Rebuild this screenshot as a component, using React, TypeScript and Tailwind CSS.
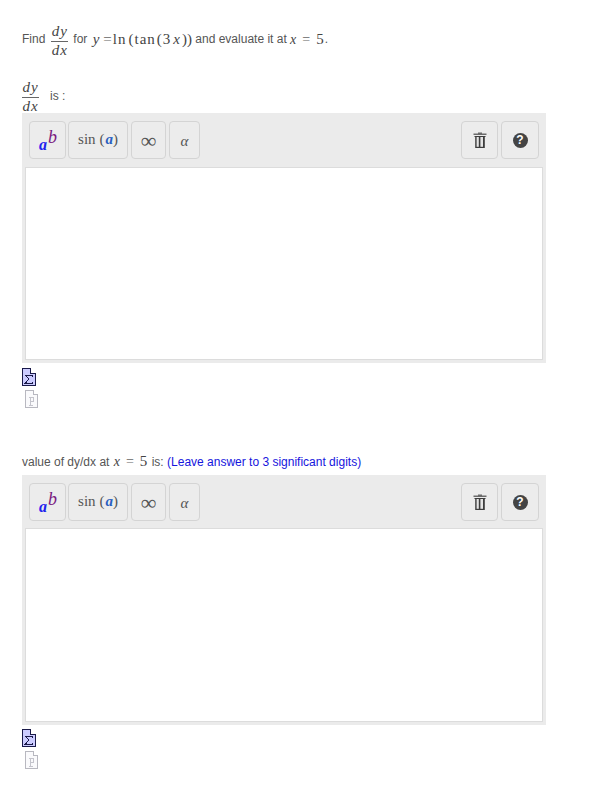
import React from "react";

const serif = "font-['Liberation_Serif',serif]";

function Frac({ className = "" }: { className?: string }) {
  return (
    <span className={`relative top-[2px] inline-flex w-[17px] flex-col items-center text-[15px] leading-[16px] italic text-[#444] ${serif} ${className}`}>
      <span className="-mt-[2px] mb-[2px] tracking-[1px]">dy</span>
      <span className="h-px w-full bg-[#666]" />
      <span className="tracking-[1px]">dx</span>
    </span>
  );
}

function SigmaIcon() {
  return (
    <svg width="14" height="18" viewBox="0 0 14 18" shapeRendering="crispEdges" className="block">
      <path d="M0.5 0.5H8.5L13.5 5.5V17.5H0.5Z" fill="#ccccff" stroke="#1a1a4a" />
      <path d="M8.5 0.5V5.5H13.5" fill="#fff" stroke="#1a1a4a" />
      <path d="M3.5 7.5H10.5V9M3.5 7.5L7 11L3.5 15H10.5V13.5" fill="none" stroke="#1a1a4a" />
    </svg>
  );
}

function PIcon() {
  return (
    <svg width="13" height="18" viewBox="0 0 13 18" shapeRendering="crispEdges" className="block">
      <path d="M0.5 0.5H8.5L12.5 4.5V17.5H0.5Z" fill="#fafafc" stroke="#b8b8c0" />
      <path d="M8.5 0.5V4.5H12.5" fill="#fff" stroke="#b8b8c0" />
      <path d="M3.5 7.5H8.5V11.5H5.5M5.5 7.5V15.5M3.5 15.5H7.5" fill="none" stroke="#c4c4cc" />
    </svg>
  );
}

function TrashIcon() {
  return (
    <svg width="14" height="16" viewBox="0 0 14 16" className="block">
      <path d="M5 0.5H9V1.5H13.5V3H0.5V1.5H5Z" fill="#6a6a6a" />
      <path d="M1.5 4H12.5V5H11.8V16H2.2V5H1.5Z" fill="#3d3d3d" />
      <rect x="3.6" y="5" width="2.2" height="9.8" fill="#e4e4e4" />
      <rect x="7.4" y="5" width="2.6" height="9.8" fill="#e4e4e4" />
    </svg>
  );
}

function HelpIcon() {
  return (
    <span className="flex h-[15px] w-[15px] items-center justify-center rounded-full bg-[#444] font-['Liberation_Sans',sans-serif] text-[12px] font-bold leading-none text-white">
      ?
    </span>
  );
}

const btn =
  "flex h-[38px] items-center justify-center rounded-[4px] border border-[#d4d4d4] bg-[#ececec]";

function Editor({ second = false }: { second?: boolean }) {
  return (
    <div className="w-[524px]">
      <div className="bg-[#ebebeb] px-[3px] pb-[3px] pt-[8px]">
        <div className="flex items-center justify-between px-[4px]">
          <div className="flex">
            <div className={`${btn} w-[37px] ${serif}`}>
              <span className="ml-[1px] text-[16px] italic leading-none">
                <span className="relative top-[4px] font-semibold text-[#2222ee]">a</span>
                <span className="relative -top-[3px] ml-[1px] text-[18px] text-[#7a1a80]">b</span>
              </span>
            </div>
            <div className={`${btn} ml-[2px] w-[60px] ${serif} pb-[2px] text-[15px] text-[#555]`}>
              <span>
                sin <span className="tracking-[1px]">(</span>
                <span className="font-semibold italic text-[#2a5fc0]">a</span>)
              </span>
            </div>
            <div className={`${btn} ml-[3px] w-[35px] ${serif} pt-[1px] text-[22px] text-[#555]`}>∞</div>
            <div className={`${btn} ml-[3px] w-[31px] ${serif} pt-[2px] text-[15px] italic text-[#555]`}>α</div>
          </div>
          <div className="flex gap-[3px]">
            <div className={`${btn} w-[37px]`}>
              <TrashIcon />
            </div>
            <div className={`${btn} w-[38px]`}>
              <HelpIcon />
            </div>
          </div>
        </div>
        <div
          className={
            second
              ? "mt-[7px] h-[194px] border border-[#dcdcdc] bg-white"
              : "mt-[8px] h-[193px] border border-[#dcdcdc] bg-white"
          }
        />
      </div>
      <div className={second ? "mt-[4px] flex flex-col" : "mt-[5px] flex flex-col"}>
        <div className="h-[22px]">
          <SigmaIcon />
        </div>
        <div className="ml-[3px] h-[18px]">
          <PIcon />
        </div>
      </div>
    </div>
  );
}

function M({ children }: { children: React.ReactNode }) {
  return <span className={`${serif} text-[14px] text-[#444]`}>{children}</span>;
}

function XEquals5() {
  return (
    <M>
      <i className="tracking-[1px]">x</i>
      <span className="ml-[5px] mr-[6px] text-[#666]">=</span>
      <span className="mr-px text-[15px]">5</span>
    </M>
  );
}

export default function App() {
  return (
    <div className="h-[808px] w-[605px] bg-white px-[22px] pt-[24px] font-['Liberation_Sans',sans-serif] text-[12px] text-[#555]">
      <div className="flex h-[30px] items-center whitespace-pre">
        <span>Find</span>
        <Frac className="ml-[6px] mr-[5px]" />
        <span className="mr-[2px]">for </span>
        <M>
          <span className="text-[15px]">
            <i className="mr-[2px] tracking-[2px]">y</i>
            <span className="text-[#666]">=</span>
            <span className="ml-px tracking-[1px]">ln</span>
            <span className="ml-[2px] tracking-[1px]">(</span>
            <span className="tracking-[1px]">tan</span>
            <span className="ml-[1px] tracking-[1px]">(</span>
            <span className="mr-[3px]">3</span>
            <i className="mr-[1px] tracking-[1px]">x</i>
            <span>))</span>
          </span>
        </M>
        <span> and evaluate it at </span>
        <XEquals5 />
        <span>.</span>
      </div>
      <div className="mt-[24px] flex h-[35px] items-center whitespace-pre">
        <Frac />
        <span className="ml-[11px]">is :</span>
      </div>
      <Editor />
      <div className="mt-[40px] flex h-[27px] items-center whitespace-pre">
        <span className="mr-px">value of dy/dx at </span>
        <XEquals5 />
        <span> is: </span>
        <span className="text-[#1515dd]">(Leave answer to 3 significant digits)</span>
      </div>
      <Editor second />
    </div>
  );
}
